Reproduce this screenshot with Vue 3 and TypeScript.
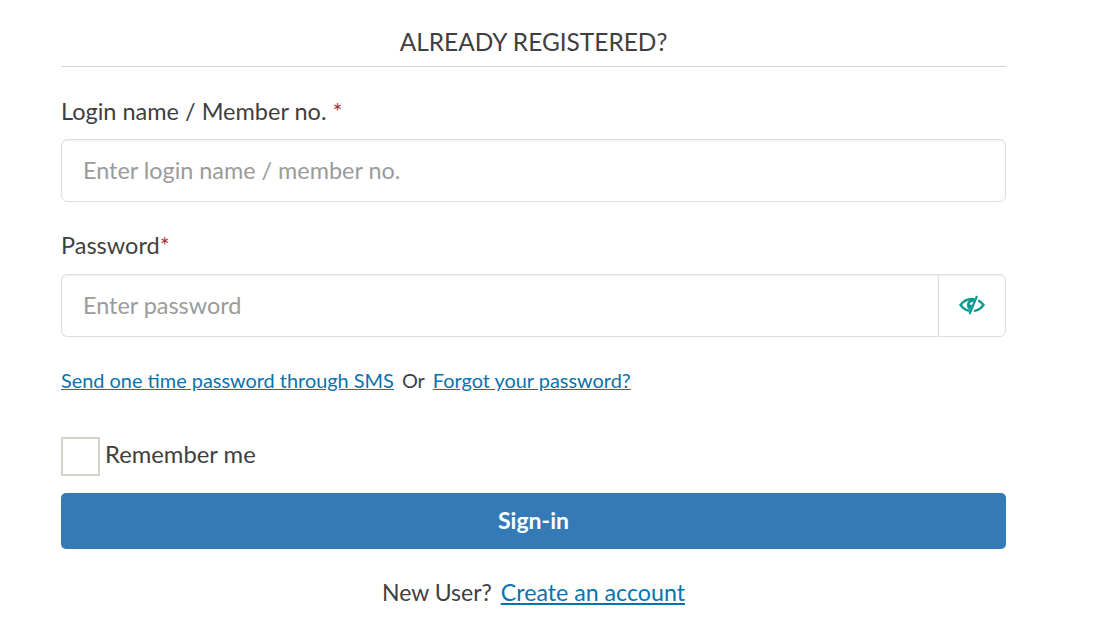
<script setup lang="ts">
import { ref } from 'vue'
const login = ref<string>('')
const password = ref<string>('')
const remember = ref<boolean>(false)
</script>

<template>
  <div class="page">
    <form class="panel" @submit.prevent>
      <h2 class="title">ALREADY REGISTERED?</h2>
      <div class="field first">
        <label class="label" for="login">Login name / Member no. <span class="req">*</span></label>
        <input id="login" v-model="login" class="input" type="text" placeholder="Enter login name / member no." />
      </div>
      <div class="field second">
        <label class="label" for="pw">Password<span class="req">*</span></label>
        <div class="group">
          <input id="pw" v-model="password" class="input joined" type="password" placeholder="Enter password" />
          <button class="eye" type="button" aria-label="Show password">
            <svg width="26" height="20" viewBox="0 0 26 20" fill="none">
              <path d="M1.500 10C4.500 6 8.500 4 13 4c4.500 0 8.500 2 11.500 6-3 4-7 6-11.500 6-4.500 0-8.500-2-11.500-6Z" stroke="#0a9a8e" stroke-width="2.400" />
              <path d="M14 3.800a6.200 6.200 0 0 0-5 9.700l2 1.500 3-5-3.500-.5c.2-1.800 2-3 4.500-2.500l2-3.200c-1-.3-2-.3-3 0Z" fill="#0a9a8e" />
              <path d="M19 1 11.500 19" stroke="#fff" stroke-width="4" />
              <path d="M18 1 10.500 19" stroke="#0a9a8e" stroke-width="2.200" />
            </svg>
          </button>
        </div>
      </div>
      <div class="links">
        <a href="#">Send one time password through SMS</a>
        <span class="or">Or</span>
        <a href="#">Forgot your password?</a>
      </div>
      <label class="remember">
        <input v-model="remember" class="check" type="checkbox" />
        <span class="remember-text">Remember me</span>
      </label>
      <button class="submit" type="submit">Sign-in</button>
      <p class="signup">New User? <a href="#">Create an account</a></p>
    </form>
  </div>
</template>

<style scoped>
.page {
  padding: 0 111px 0 61px;
  font-family: "Lato", "Open Sans", sans-serif;
  color: #3f3f3f;
}
.panel { display: flex; flex-direction: column; }
.title {
  margin: 0;
  height: 67px;
  padding-top: 26px;
  box-sizing: border-box;
  border-bottom: 1px solid #d4d4d4;
  font-size: 24.45px;
  line-height: 31px;
  font-weight: 400;
  text-align: center;
}
.field { display: flex; flex-direction: column; }
.first { margin-top: 29px; }
.first .label { margin-bottom: 13px; }
.second { margin-top: 28px; }
.label { font-size: 23.5px; line-height: 30px; margin-bottom: 14px; }
.req { color: #a33; }
.input {
  height: 63px;
  width: 100%;
  box-sizing: border-box;
  padding: 0 21px 2px;
  border: 1px solid #dedede;
  border-radius: 6px;
  box-shadow: inset 0 1px 2px rgba(0,0,0,.07);
  font: inherit;
  font-size: 23.4px;
  color: #3f3f3f;
  outline: none;
}
.input::placeholder { color: #9b9b9b; opacity: 1; }
.group { display: flex; }
.joined { flex: 1; border-right: 0; border-radius: 6px 0 0 6px; }
.eye {
  width: 68px;
  flex: none;
  display: flex;
  align-items: center;
  justify-content: center;
  background: #fff;
  border: 1px solid #dedede;
  border-radius: 0 6px 6px 0;
  box-shadow: inset 0 1px 2px rgba(0,0,0,.07);
  padding: 0 0 2px;
}
.links { margin-top: 29px; font-size: 19.9px; line-height: 28px; display: flex; gap: 8px; }
a { color: #0a72ad; text-decoration: underline; }
.remember { margin-top: 43px; display: flex; align-items: center; gap: 5px; font-size: 23.8px; }
.remember-text { padding-bottom: 5px; }
.check {
  appearance: none;
  width: 39px;
  height: 39px;
  margin: 0;
  border: 2px solid #d6d2cc;
  background: #fff;
}
.submit {
  margin-top: 17px;
  height: 56px;
  background: #337ab7;
  border: 0;
  border-radius: 5px;
  color: #fff;
  font: inherit;
  font-size: 23px;
  font-weight: 700;
  padding: 0 0 2px;
}
.signup { margin: 27px 0 0; text-align: center; font-size: 23px; line-height: 32px; }
.signup a { margin-left: 3px; font-size: 23.2px; }
</style>
